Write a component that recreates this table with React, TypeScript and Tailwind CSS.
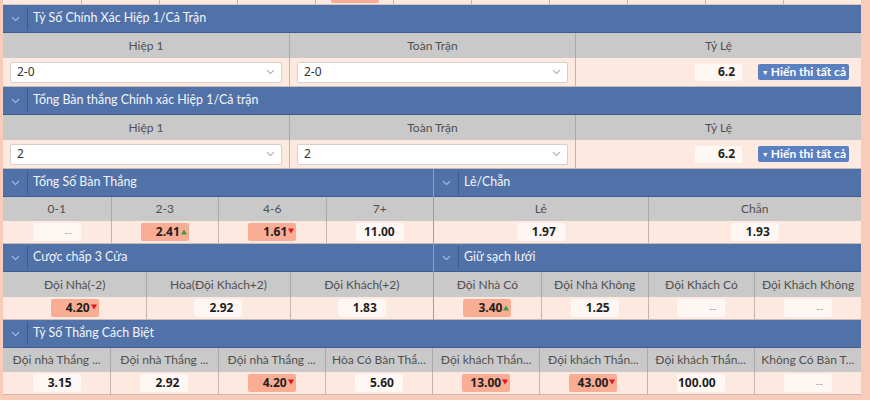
import React from "react";

const Chevron = ({ color = "#b3c2de" }: { color?: string }) => (
  <svg width="9" height="6" viewBox="0 0 9 6" fill="none">
    <path d="M1 1.2 L4.5 4.6 L8 1.2" stroke={color} strokeWidth="1.1" />
  </svg>
);

const Arrow = ({ up }: { up: boolean }) =>
  up ? (
    <svg width="6" height="6" viewBox="0 0 6 6" className="absolute right-[2px] top-[6px]">
      <path d="M0 5.5 L3 0.5 L6 5.5 Z" fill="#3f9d3f" />
    </svg>
  ) : (
    <svg width="6" height="6" viewBox="0 0 6 6" className="absolute right-[2px] top-[5px]">
      <path d="M0 0.5 L6 0.5 L3 5.5 Z" fill="#e2141c" />
    </svg>
  );

const Header = ({ title }: { title: string }) => (
  <div className="flex h-[28px] items-stretch border-b border-[#3f5c8d] bg-[#5172a8]">
    <div className="flex w-[24px] items-center justify-center">
      <Chevron />
    </div>
    <div className="my-[2px] w-px bg-[#3c5a8b]" />
    <div className="flex items-center pl-[5px] font-['Lato',sans-serif] text-[12.4px] text-[#f2f5fb]">{title}</div>
  </div>
);

type Odd = { v: string; hl?: boolean; up?: boolean; down?: boolean };

const OddBox = ({ o }: { o: Odd }) => (
  <div
    className={`relative flex h-[18px] w-[48px] items-center justify-end rounded-[2px] pr-[9px] ${
      o.hl ? "bg-[#f9ad94]" : "bg-[#fff7f3]"
    }`}
  >
    {o.v === "--" ? (
      <span className="text-[11px] text-[#aaa]">--</span>
    ) : (
      <span className="text-[12px] font-bold text-[#1e1e1e]">{o.v}</span>
    )}
    {o.up && <Arrow up />}
    {o.down && <Arrow up={false} />}
  </div>
);

const gridCols: Record<number, string> = {
  2: "grid-cols-2",
  3: "grid-cols-3",
  4: "grid-cols-4",
  8: "grid-cols-8",
};

const OddsBlock = ({
  title,
  cols,
  odds,
  gh,
  dh,
}: {
  title: string;
  cols: string[];
  odds: Odd[];
  gh: string;
  dh: string;
}) => (
  <div className="flex flex-col">
    <Header title={title} />
    <div className={`grid ${gridCols[cols.length]} ${gh} bg-[#c9c9c9]`}>
      {cols.map((c, i) => (
        <div
          key={i}
          className={`flex items-center justify-center overflow-hidden whitespace-nowrap font-['Lato',sans-serif] text-[12px] text-[#505050] ${
            i > 0 ? "border-l border-[#a9a9a9]" : ""
          }`}
        >
          {c}
        </div>
      ))}
    </div>
    <div className={`grid ${gridCols[cols.length]} ${dh} border-b border-[#c9bcb6] bg-[#fee9e0]`}>
      {odds.map((o, i) => (
        <div
          key={i}
          className={`flex items-center justify-center ${i > 0 ? "border-l border-[#c2b4ae]" : ""}`}
        >
          <OddBox o={o} />
        </div>
      ))}
    </div>
  </div>
);

const Select = ({ v }: { v: string }) => (
  <div className="flex h-[21px] w-full items-center justify-between rounded-[2px] border border-[#d6cfcc] bg-white pl-[6px] pr-[6px] text-[12px] text-[#333]">
    <span>{v}</span>
    <Chevron color="#aaaaaa" />
  </div>
);

const SelectBlock = ({ title, v1, v2 }: { title: string; v1: string; v2: string }) => (
  <div className="flex flex-col">
    <Header title={title} />
    <div className="grid h-[25px] grid-cols-3 bg-[#c9c9c9]">
      {["Hiệp 1", "Toàn Trận", "Tỷ Lệ"].map((c, i) => (
        <div
          key={i}
          className={`flex items-center justify-center font-['Lato',sans-serif] text-[12px] text-[#505050] ${
            i > 0 ? "border-l border-[#a9a9a9]" : ""
          }`}
        >
          {c}
        </div>
      ))}
    </div>
    <div className="grid h-[29px] grid-cols-3 border-b border-[#c9bcb6] bg-[#fee9e0]">
      <div className="flex items-center px-[7px]">
        <Select v={v1} />
      </div>
      <div className="flex items-center border-l border-[#c2b4ae] px-[7px]">
        <Select v={v2} />
      </div>
      <div className="relative flex items-center justify-center border-l border-[#c2b4ae]">
        <div className="flex h-[17px] w-[47px] items-center justify-end bg-[#fff7f3] pr-[7px] text-[12px] font-bold text-[#1e1e1e]">
          6.2
        </div>
        <div className="absolute right-[12px] top-[6px] flex h-[16px] items-center whitespace-nowrap rounded-[2px] bg-[#5b80c1] pl-[4px] pr-[3px] font-['Lato',sans-serif] text-[12px] font-bold leading-none text-white">
          <span className="mr-[2px] text-[7px]">▼</span>Hiển thi tất cả
        </div>
      </div>
    </div>
  </div>
);

export default function App() {
  const top = Array.from({ length: 11 });
  return (
    <div className="h-[400px] w-[870px] overflow-hidden bg-[#fbcbb9] pl-[3px] pr-[9px] font-['Noto_Sans',sans-serif]">
      <div className="flex w-[858px] flex-col">
        <div className="grid h-[5px] grid-cols-11 border-b border-[#d8c6bf] bg-[#fee9e0]">
          {top.map((_, i) => (
            <div key={i} className={`flex justify-center ${i > 0 ? "border-l border-[#c2b4ae]" : ""}`}>
              {i === 4 && <div className="h-[3px] w-[48px] rounded-b-[2px] bg-[#f9ad94]" />}
            </div>
          ))}
        </div>
        <SelectBlock title="Tỷ Số Chính Xác Hiệp 1/Cả Trận" v1="2-0" v2="2-0" />
        <SelectBlock title="Tổng Bàn thắng Chính xác Hiệp 1/Cả trận" v1="2" v2="2" />
        <div className="grid grid-cols-[430px_428px]">
          <OddsBlock
            title="Tổng Số Bàn Thắng"
            cols={["0-1", "2-3", "4-6", "7+"]}
            odds={[{ v: "--" }, { v: "2.41", hl: true, up: true }, { v: "1.61", hl: true, down: true }, { v: "11.00" }]}
            gh="h-[24px]"
            dh="h-[23px]"
          />
          <div className="border-l border-[#9e9e9e]">
            <OddsBlock
              title="Lẻ/Chẵn"
              cols={["Lẻ", "Chẵn"]}
              odds={[{ v: "1.97" }, { v: "1.93" }]}
              gh="h-[24px]"
              dh="h-[23px]"
            />
          </div>
        </div>
        <div className="grid grid-cols-[430px_428px]">
          <OddsBlock
            title="Cược chấp 3 Cửa"
            cols={["Đội Nhà(-2)", "Hòa(Đội Khách+2)", "Đội Khách(+2)"]}
            odds={[{ v: "4.20", hl: true, down: true }, { v: "2.92" }, { v: "1.83" }]}
            gh="h-[25px]"
            dh="h-[23px]"
          />
          <div className="border-l border-[#9e9e9e]">
            <OddsBlock
              title="Giữ sạch lưới"
              cols={["Đội Nhà Có", "Đội Nhà Không", "Đội Khách Có", "Đội Khách Không"]}
              odds={[{ v: "3.40", hl: true, up: true }, { v: "1.25" }, { v: "--" }, { v: "--" }]}
              gh="h-[25px]"
              dh="h-[23px]"
            />
          </div>
        </div>
        <OddsBlock
          title="Tỷ Số Thắng Cách Biệt"
          cols={[
            "Đội nhà Thắng ...",
            "Đội nhà Thắng ...",
            "Đội nhà Thắng ...",
            "Hòa Có Bàn Thắ...",
            "Đội khách Thắn...",
            "Đội khách Thắn...",
            "Đội khách Thắn...",
            "Không Có Bàn T...",
          ]}
          odds={[
            { v: "3.15" },
            { v: "2.92" },
            { v: "4.20", hl: true, down: true },
            { v: "5.60" },
            { v: "13.00", hl: true, down: true },
            { v: "43.00", hl: true, down: true },
            { v: "100.00" },
            { v: "--" },
          ]}
          gh="h-[24px]"
          dh="h-[23px]"
        />
      </div>
    </div>
  );
}
